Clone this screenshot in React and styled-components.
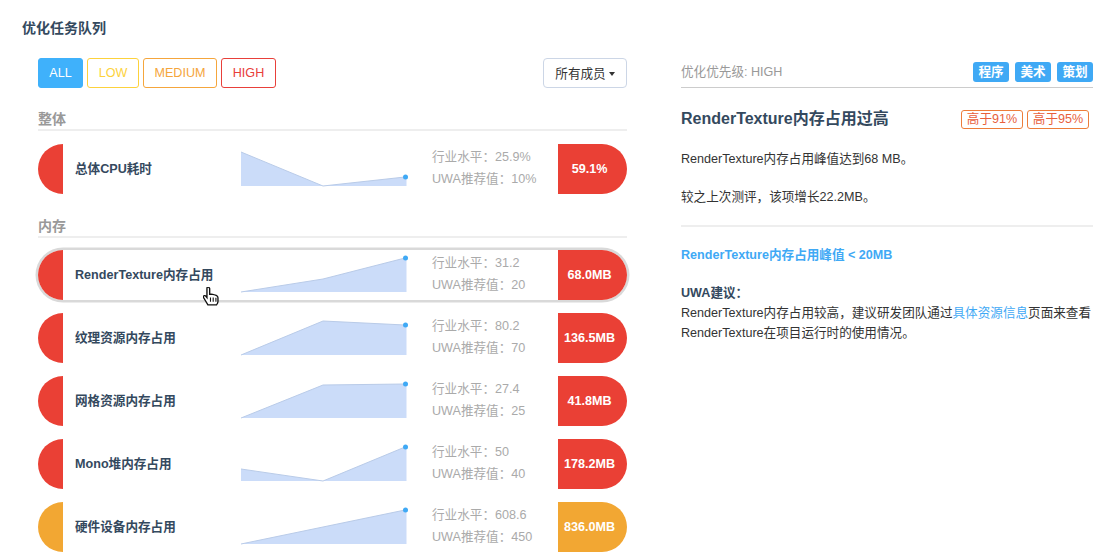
import React from "react";
import styled, { createGlobalStyle } from "styled-components";

const Global = createGlobalStyle`
  html, body { margin: 0; padding: 0; background: #fff; }
  body { font-family: "Liberation Sans", "Noto Sans CJK SC", sans-serif; font-size: 12.6px; color: #34495e; }
`;
const Page = styled.div`
  position: relative; width: 1115px; height: 560px; overflow: hidden; box-sizing: border-box; padding: 18px 22px 0;
`;
const Title = styled.h1`
  margin: 0; font-size: 14px; line-height: 20px; font-weight: 700; color: #34495e;
`;
const Columns = styled.div`
  display: flex; margin-top: 20px; padding-left: 16px;
`;
const Left = styled.div`width: 589px; flex: none;`;
const Right = styled.div`width: 412px; flex: none; margin-left: 54px;`;
const Toolbar = styled.div`display: flex; gap: 4px; height: 30px;`;
const Filter = styled.button`
  box-sizing: border-box; height: 30px; width: ${p => p.$w}px; padding: 0; font: inherit; font-size: 12.6px;
  border-radius: 3px; border: 1px solid ${p => p.$c}; background: ${p => (p.$on ? p.$c : "#fff")};
  color: ${p => (p.$on ? "#fff" : p.$c)};
`;
const Member = styled.button`
  box-sizing: border-box; margin-left: auto; height: 30px; width: 84px; padding: 0 0 2px; font: inherit; font-size: 12.6px;
  color: #333; background: #fff; border: 1px solid #ccd6e6; border-radius: 4px;
  display: flex; align-items: center; justify-content: center; gap: 3px;
`;
const Caret = styled.span`
  width: 0; height: 0; border-left: 3.5px solid transparent; border-right: 3.5px solid transparent; border-top: 4px solid #333; margin-top: 4px;
`;
const Section = styled.div`
  margin-top: ${p => p.$mt}px; height: 20px; line-height: 20px; font-size: 14px; font-weight: 700; color: #999;
  border-bottom: 2px solid #eee; margin-bottom: ${p => p.$mb}px; box-sizing: content-box;
`;
const Row = styled.div`
  display: flex; height: 50px; margin-bottom: 13px; border-radius: 25px; align-items: stretch;
  ${p => p.$focus && "box-shadow: 0 0 0 2.5px #d9d9d9;"}
`;
const Cap = styled.div`
  flex: none; width: 25px; background: ${p => p.$c}; border-radius: 25px 0 0 25px;
`;
const Name = styled.div`
  flex: none; width: 166px; padding-left: 12px; font-weight: 700; line-height: 50px; color: #34495e; white-space: nowrap;
`;
const Chart = styled.svg`flex: none; width: 168px; height: 50px; display: block;`;
const Stats = styled.div`
  flex: none; width: 126px; margin-left: 23px; color: #aaa; font-size: 12.6px; line-height: 22px; padding-top: 2px; white-space: nowrap;
`;
const Value = styled.div`
  flex: none; box-sizing: border-box; width: 69px; padding-right: 6px; background: ${p => p.$c}; border-radius: 0 25px 25px 0; color: #fff; font-weight: 700;
  display: flex; align-items: center; justify-content: center; white-space: nowrap;
`;
const PanelHead = styled.div`
  display: flex; align-items: center; justify-content: space-between; height: 29px; border-bottom: 1px solid #ccc; color: #999;
`;
const HeadLabel = styled.span`margin-top: -4px;`;
const Tags = styled.div`display: flex; gap: 6px; margin-top: -2px;`;
const Tag = styled.span`
  width: 36px; height: 20px; line-height: 20px; text-align: center; border-radius: 3px; background: #3fa9f5; color: #fff; font-weight: 700;
`;
const IssueHead = styled.div`
  display: flex; align-items: center; justify-content: space-between; margin-top: 19px; height: 20px; padding-right: 4px;
`;
const IssueTitle = styled.h2`margin: 0; font-size: 16px; font-weight: 700; color: #34495e;`;
const Badges = styled.div`display: flex; gap: 4px; margin-top: 4px;`;
const Badge = styled.span`
  box-sizing: border-box; width: 62px; height: 19px; line-height: 17px; text-align: center; border: 1px solid #ed7d3a; border-radius: 3px; color: #e8603c; font-size: 12.6px;
`;
const Para = styled.p`margin: ${p => p.$mt}px 0 0; line-height: 20px; color: #333; white-space: nowrap;`;
const Divider = styled.div`height: 2px; background: #eee; margin-top: 18px;`;
const Goal = styled.div`margin-top: 18px; line-height: 20px; font-weight: 700; color: #3fa9f5;`;
const Strong = styled.div`margin-top: 18px; line-height: 20px; font-weight: 700; color: #34495e;`;
const Link = styled.span`color: #3fa9f5;`;
const Pointer = styled.svg`position: absolute; left: 203px; top: 287px; width: 17px; height: 19px;`;

const rows = [
  { c: "#ea4035", name: "RenderTexture内存占用", a: "31.2", b: "20", v: "68.0MB", p: [[0, 42], [82, 29], [164, 8]], base: 42, focus: true },
  { c: "#ea4035", name: "纹理资源内存占用", a: "80.2", b: "70", v: "136.5MB", p: [[0, 42], [82, 8], [164, 12]], base: 42 },
  { c: "#ea4035", name: "网格资源内存占用", a: "27.4", b: "25", v: "41.8MB", p: [[0, 42], [82, 9], [164, 8]], base: 42 },
  { c: "#ea4035", name: "Mono堆内存占用", a: "50", b: "40", v: "178.2MB", p: [[0, 30], [82, 42], [164, 8]], base: 42 },
  { c: "#f2a733", name: "硬件设备内存占用", a: "608.6", b: "450", v: "836.0MB", p: [[0, 42], [82, 25], [164, 8]], base: 42 },
];

const Spark = ({ p, base }) => {
  const line = p.map(q => q.join(",")).join(" ");
  const last = p[p.length - 1];
  return (
    <Chart viewBox="0 0 168 50">
      <polygon points={`0,${base} ${line} 165.500,${last[1]} 165.500,${base}`} fill="#cbdcf9" />
      <polyline points={line} fill="none" stroke="#b9cbe8" strokeWidth="1" />
      <circle cx="164.500" cy={last[1]} r="2.500" fill="#3fa9f5" />
    </Chart>
  );
};

const Item = ({ r }) => (
  <Row $focus={r.focus}>
    <Cap $c={r.c} />
    <Name>{r.name}</Name>
    <Spark p={r.p} base={r.base} />
    <Stats>行业水平：{r.a}<br />UWA推荐值：{r.b}</Stats>
    <Value $c={r.c}>{r.v}</Value>
  </Row>
);

export default function App() {
  return (
    <Page>
      <Global />
      <Title>优化任务队列</Title>
      <Columns>
        <Left>
          <Toolbar>
            <Filter $w={45} $c="#3fb1fb" $on>ALL</Filter>
            <Filter $w={52} $c="#fdd23c">LOW</Filter>
            <Filter $w={74} $c="#f5a63c">MEDIUM</Filter>
            <Filter $w={55} $c="#e8403a">HIGH</Filter>
            <Member>所有成员<Caret /></Member>
          </Toolbar>
          <Section $mt={21} $mb={13}>整体</Section>
          <Item r={{ c: "#ea4035", name: "总体CPU耗时", a: "25.9%", b: "10%", v: "59.1%", p: [[0, 8], [82, 42], [164, 33]], base: 42 }} />
          <Section $mt={22} $mb={12}>内存</Section>
          {rows.map(r => <Item key={r.name} r={r} />)}
        </Left>
        <Right>
          <PanelHead>
            <HeadLabel>优化优先级: HIGH</HeadLabel>
            <Tags><Tag>程序</Tag><Tag>美术</Tag><Tag>策划</Tag></Tags>
          </PanelHead>
          <IssueHead>
            <IssueTitle>RenderTexture内存占用过高</IssueTitle>
            <Badges><Badge>高于91%</Badge><Badge>高于95%</Badge></Badges>
          </IssueHead>
          <Para $mt={22}>RenderTexture内存占用峰值达到68 MB。</Para>
          <Para $mt={18}>较之上次测评，该项增长22.2MB。</Para>
          <Divider />
          <Goal>RenderTexture内存占用峰值 &lt; 20MB</Goal>
          <Strong>UWA建议：</Strong>
          <Para $mt={0}>RenderTexture内存占用较高，建议研发团队通过<Link>具体资源信息</Link>页面来查看</Para>
          <Para $mt={0}>RenderTexture在项目运行时的使用情况。</Para>
        </Right>
      </Columns>
      <Pointer viewBox="2 1 12.500 15.500" preserveAspectRatio="none">
        <path d="M5 1.500c.8-.6 1.800-.2 1.900.8V7l1-.2 1.200.2 1.200.3 1.400.5c.9.4 1.300 1 1.300 2v3c0 1-.4 1.800-1 2.700H5.600L2.600 10c-.6-1-.4-1.700.3-1.900.6-.2 1.100.1 1.600.9l.4.6V2.500c0-.4 0-.8.1-1z" fill="#fff" stroke="#111" strokeWidth="1" />
        <path d="M7.500 9.500v3.500M9.500 9.500v3.500M11.500 9.700v3.300" stroke="#111" strokeWidth=".8" />
      </Pointer>
    </Page>
  );
}
